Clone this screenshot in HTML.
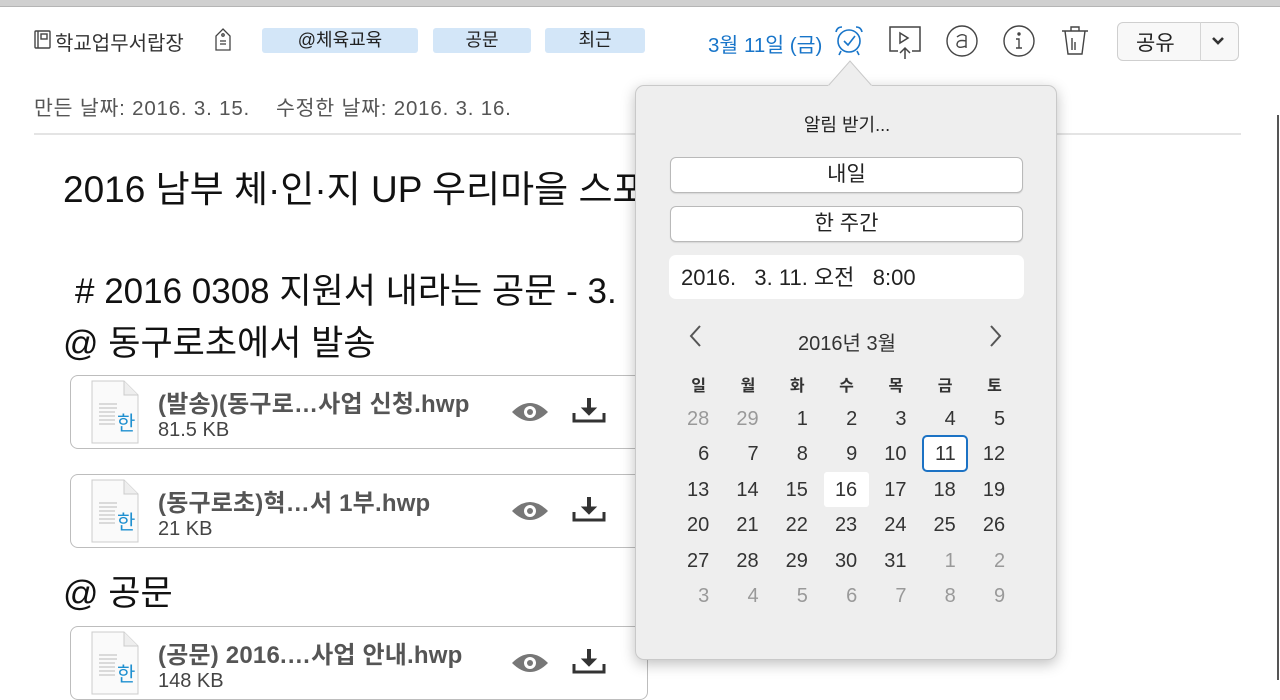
<!DOCTYPE html>
<html><head><meta charset="utf-8"><style>
*{margin:0;padding:0;box-sizing:border-box}
body{width:1280px;height:680px;overflow:hidden;background:#fff;position:relative;font-family:"Liberation Sans","Noto Sans CJK KR",sans-serif;color:#222}
.a{position:absolute;white-space:nowrap}
.tag{position:absolute;top:28px;height:25px;background:#d3e6f8;border-radius:3px;font-size:18px;text-align:center;line-height:25px;color:#222}
.card{position:absolute;left:70px;width:578px;height:74px;border:1px solid #bdbdbd;border-radius:8px;background:#fff}
.fn{position:absolute;left:87px;top:8px;font-size:24px;font-weight:bold;color:#555;letter-spacing:0.2px}
.fs{position:absolute;left:87px;top:43px;font-size:20px;color:#444}
.hd{position:absolute;white-space:nowrap;font-size:35px;color:#111}
.pop{position:absolute;left:635px;top:85px;width:422px;height:575px;background:#eeeeee;border:1px solid #c9c9c9;border-radius:9px;box-shadow:0 4px 14px rgba(0,0,0,.25)}
.btn{position:absolute;left:34px;width:353px;height:36px;background:#fff;border:1px solid #b9b9b9;border-radius:6px;font-size:21px;text-align:center;line-height:34px;color:#222;box-shadow:0 1px 1px rgba(0,0,0,.1)}
.c{position:absolute;width:49.3px;text-align:right;font-size:20px;line-height:24px;color:#333}
.g{color:#999}
.h{font-size:16px;font-weight:bold;text-align:center;width:49.3px;padding-right:0}
</style></head><body>
<div class="a" style="left:0;top:0;width:1280px;height:7px;background:#d0d0d0;border-bottom:1px solid #b5b5b5"></div>
<svg class="a" style="left:34px;top:30px" width="18" height="20" viewBox="0 0 18 20" fill="none" stroke="#444" stroke-width="1.4"><rect x="1" y="1" width="15" height="17" rx="1"/><line x1="4" y1="1" x2="4" y2="18"/><rect x="7" y="4" width="6" height="5"/></svg>
<div class="a" style="left:55px;top:27px;font-size:20px;color:#333">학교업무서랍장</div>
<svg class="a" style="left:213px;top:27px" width="20" height="26" viewBox="0 0 20 26" fill="none" stroke="#444" stroke-width="1.3"><path d="M10 2 L17 9 V23 H3 V9 Z"/><circle cx="10" cy="8" r="1.2"/><line x1="7" y1="14" x2="13" y2="14"/><line x1="7" y1="17" x2="13" y2="17"/></svg>
<div class="tag" style="left:262px;width:156px">@체육교육</div>
<div class="tag" style="left:433px;width:98px">공문</div>
<div class="tag" style="left:545px;width:100px">최근</div>
<div class="a" style="left:708px;top:28px;font-size:20.5px;color:#1875c9">3월 11일 (금)</div>
<svg class="a" style="left:832px;top:24px" width="34" height="34" viewBox="0 0 34 34" fill="none" stroke="#1875c9" stroke-width="1.6"><circle cx="17" cy="17" r="11"/><path d="M12 17 L16 21 L23 12"/><path d="M4 8 Q5 3 10 3"/><path d="M30 8 Q29 3 24 3"/><line x1="9" y1="27" x2="7" y2="31"/><line x1="25" y1="27" x2="27" y2="31"/></svg>
<svg class="a" style="left:887px;top:24px" width="36" height="36" viewBox="0 0 36 36" fill="none" stroke="#444" stroke-width="1.5"><path d="M11 27 H3 V3 H33 V27 H25"/><path d="M13 9 L21 14 L13 19 Z"/><path d="M18 35 V24 M13 29 L18 24 L23 29"/></svg>
<svg class="a" style="left:945px;top:24px" width="34" height="34" viewBox="0 0 34 34" fill="none" stroke="#444" stroke-width="1.4"><circle cx="17" cy="17" r="15"/><path d="M12 13 Q17 9 21 12 V24 M21 17 Q12 15 12 21 Q13 25 21 22"/></svg>
<svg class="a" style="left:1002px;top:24px" width="34" height="34" viewBox="0 0 34 34" fill="none" stroke="#444" stroke-width="1.4"><circle cx="17" cy="17" r="15"/><circle cx="17" cy="10" r="1" fill="#444"/><path d="M14 15 H17 V24 M14 24 H20"/></svg>
<svg class="a" style="left:1060px;top:24px" width="30" height="32" viewBox="0 0 30 32" fill="none" stroke="#444" stroke-width="1.4"><path d="M2 7 H28 M11 7 V3 H19 V7 M5 7 L8 30 H22 L25 7"/><path d="M12 14 V26 M15 18 V26"/></svg>
<div class="a" style="left:1117px;top:22px;width:122px;height:39px;border:1px solid #cfcfcf;border-radius:6px;background:#f8f8f8"></div>
<div class="a" style="left:1200px;top:22px;width:1px;height:39px;background:#d5d5d5"></div>
<div class="a" style="left:1136px;top:27px;font-size:21px;color:#222">공유</div>
<svg class="a" style="left:1211px;top:36px" width="14" height="10" viewBox="0 0 14 10"><path d="M2 2 L7 7 L12 2" stroke="#333" stroke-width="2.6" fill="none"/></svg>
<div class="a" style="left:34px;top:91px;font-size:20.5px;letter-spacing:0.8px;color:#555">만든 날짜: 2016. 3. 15.&nbsp;&nbsp;&nbsp;&nbsp;수정한 날짜: 2016. 3. 16.</div>
<div class="a" style="left:34px;top:133px;width:1207px;height:2px;background:#e4e4e4"></div>
<div class="hd" style="left:63px;top:159px;font-size:37px">2016 남부 체·인·지 UP 우리마을 스포츠</div>
<div class="hd" style="left:75px;top:263px"># 2016 0308 지원서 내라는 공문 - 3.</div>
<div class="hd" style="left:63px;top:315px">@ 동구로초에서 발송</div>
<div class="hd" style="left:63px;top:565px">@ 공문</div>
<div class="card" style="top:375px"><svg class="a" style="left:19px;top:4px" width="50" height="64" viewBox="0 0 50 64"><path d="M2 1 H34 L48 15 V63 H2 Z" fill="#fafafa" stroke="#ccc"/><path d="M34 1 V15 H48" fill="#eee" stroke="#ccc"/><g stroke="#bbb"><line x1="9" y1="24" x2="27" y2="24"/><line x1="9" y1="28" x2="27" y2="28"/><line x1="9" y1="32" x2="25" y2="32"/><line x1="9" y1="36" x2="25" y2="36"/><line x1="9" y1="40" x2="25" y2="40"/><line x1="9" y1="44" x2="25" y2="44"/></g><text x="27" y="50" font-size="20" fill="#1f90d0" font-family="Noto Sans CJK KR">한</text></svg><div class="fn">(발송)(동구로…사업 신청.hwp</div><div class="fs">81.5 KB</div>
<svg class="a" style="left:440px;top:23px" width="38" height="26" viewBox="0 0 38 26"><path d="M1 13 Q19 -5 37 13 Q19 31 1 13Z" fill="#777"/><circle cx="19" cy="13" r="6" fill="#fff"/><circle cx="19" cy="13" r="3" fill="#777"/></svg>
<svg class="a" style="left:500px;top:20px" width="36" height="30" viewBox="0 0 36 30" fill="none" stroke="#333"><path d="M18 2 V15" stroke-width="4"/><path d="M11 12 L18 19 L25 12 Z" fill="#333" stroke-width="1"/><path d="M3 17 V25 H33 V17" stroke-width="3"/></svg></div>
<div class="card" style="top:474px"><svg class="a" style="left:19px;top:4px" width="50" height="64" viewBox="0 0 50 64"><path d="M2 1 H34 L48 15 V63 H2 Z" fill="#fafafa" stroke="#ccc"/><path d="M34 1 V15 H48" fill="#eee" stroke="#ccc"/><g stroke="#bbb"><line x1="9" y1="24" x2="27" y2="24"/><line x1="9" y1="28" x2="27" y2="28"/><line x1="9" y1="32" x2="25" y2="32"/><line x1="9" y1="36" x2="25" y2="36"/><line x1="9" y1="40" x2="25" y2="40"/><line x1="9" y1="44" x2="25" y2="44"/></g><text x="27" y="50" font-size="20" fill="#1f90d0" font-family="Noto Sans CJK KR">한</text></svg><div class="fn">(동구로초)혁…서 1부.hwp</div><div class="fs">21 KB</div>
<svg class="a" style="left:440px;top:23px" width="38" height="26" viewBox="0 0 38 26"><path d="M1 13 Q19 -5 37 13 Q19 31 1 13Z" fill="#777"/><circle cx="19" cy="13" r="6" fill="#fff"/><circle cx="19" cy="13" r="3" fill="#777"/></svg>
<svg class="a" style="left:500px;top:20px" width="36" height="30" viewBox="0 0 36 30" fill="none" stroke="#333"><path d="M18 2 V15" stroke-width="4"/><path d="M11 12 L18 19 L25 12 Z" fill="#333" stroke-width="1"/><path d="M3 17 V25 H33 V17" stroke-width="3"/></svg></div>
<div class="card" style="top:626px"><svg class="a" style="left:19px;top:4px" width="50" height="64" viewBox="0 0 50 64"><path d="M2 1 H34 L48 15 V63 H2 Z" fill="#fafafa" stroke="#ccc"/><path d="M34 1 V15 H48" fill="#eee" stroke="#ccc"/><g stroke="#bbb"><line x1="9" y1="24" x2="27" y2="24"/><line x1="9" y1="28" x2="27" y2="28"/><line x1="9" y1="32" x2="25" y2="32"/><line x1="9" y1="36" x2="25" y2="36"/><line x1="9" y1="40" x2="25" y2="40"/><line x1="9" y1="44" x2="25" y2="44"/></g><text x="27" y="50" font-size="20" fill="#1f90d0" font-family="Noto Sans CJK KR">한</text></svg><div class="fn">(공문) 2016.…사업 안내.hwp</div><div class="fs">148 KB</div>
<svg class="a" style="left:440px;top:23px" width="38" height="26" viewBox="0 0 38 26"><path d="M1 13 Q19 -5 37 13 Q19 31 1 13Z" fill="#777"/><circle cx="19" cy="13" r="6" fill="#fff"/><circle cx="19" cy="13" r="3" fill="#777"/></svg>
<svg class="a" style="left:500px;top:20px" width="36" height="30" viewBox="0 0 36 30" fill="none" stroke="#333"><path d="M18 2 V15" stroke-width="4"/><path d="M11 12 L18 19 L25 12 Z" fill="#333" stroke-width="1"/><path d="M3 17 V25 H33 V17" stroke-width="3"/></svg></div>
<div class="a" style="left:1277px;top:115px;width:2px;height:565px;background:#555"></div>

<div class="pop">
<div class="a" style="left:0;width:422px;top:25px;text-align:center;font-size:18px;color:#222">알림 받기...</div>
<div class="btn" style="top:71px">내일</div>
<div class="btn" style="top:120px">한 주간</div>
<div class="a" style="left:33px;top:169px;width:355px;height:44px;background:#fff;border-radius:7px;font-size:22px;line-height:46px;padding-left:12px;color:#222">2016.&nbsp;&nbsp;&nbsp;3. 11. 오전&nbsp;&nbsp;&nbsp;8:00</div>
<svg class="a" style="left:52px;top:238px" width="14" height="24" viewBox="0 0 14 24"><path d="M12 2 L3 12 L12 22" stroke="#555" stroke-width="2" fill="none"/></svg>
<svg class="a" style="left:353px;top:238px" width="14" height="24" viewBox="0 0 14 24"><path d="M2 2 L11 12 L2 22" stroke="#555" stroke-width="2" fill="none"/></svg>
<div class="a" style="left:0;width:422px;top:241px;text-align:center;font-size:20px;color:#333">2016년 3월</div>
<div class="a" style="left:286px;top:349px;width:46px;height:37px;border:2px solid #1c72c4;border-radius:5px;background:#fff"></div>
<div class="a" style="left:188px;top:386px;width:45px;height:35px;background:#fff;border-radius:3px"></div>
<div id="cal"></div>
</div>
<svg class="a" style="left:828px;top:59px" width="44" height="28" viewBox="0 0 44 28"><path d="M0 27 L22 2 L44 27" fill="#eeeeee" stroke="#c9c9c9"/><rect x="0" y="26.5" width="44" height="2" fill="#eeeeee"/></svg>
<script>
var p=document.querySelector('.pop');
var hd=['일','월','화','수','목','금','토'];var h='';
for(var i=0;i<7;i++)h+='<div class="c h" style="left:'+(38+i*49.3)+'px;top:289px;color:#333">'+hd[i]+'</div>';
var d=[[28,29,1,2,3,4,5],[6,7,8,9,10,11,12],[13,14,15,16,17,18,19],[20,21,22,23,24,25,26],[27,28,29,30,31,1,2],[3,4,5,6,7,8,9]];
for(var r=0;r<6;r++)for(var i=0;i<7;i++){var g=(r==0&&i<2)||(r==4&&i>4)||r==5;
h+='<div class="c'+(g?' g':'')+'" style="left:'+(24+i*49.3)+'px;top:'+(321+r*35.4)+'px">'+d[r][i]+'</div>';}
p.insertAdjacentHTML('beforeend',h);
</script>
</body></html>
